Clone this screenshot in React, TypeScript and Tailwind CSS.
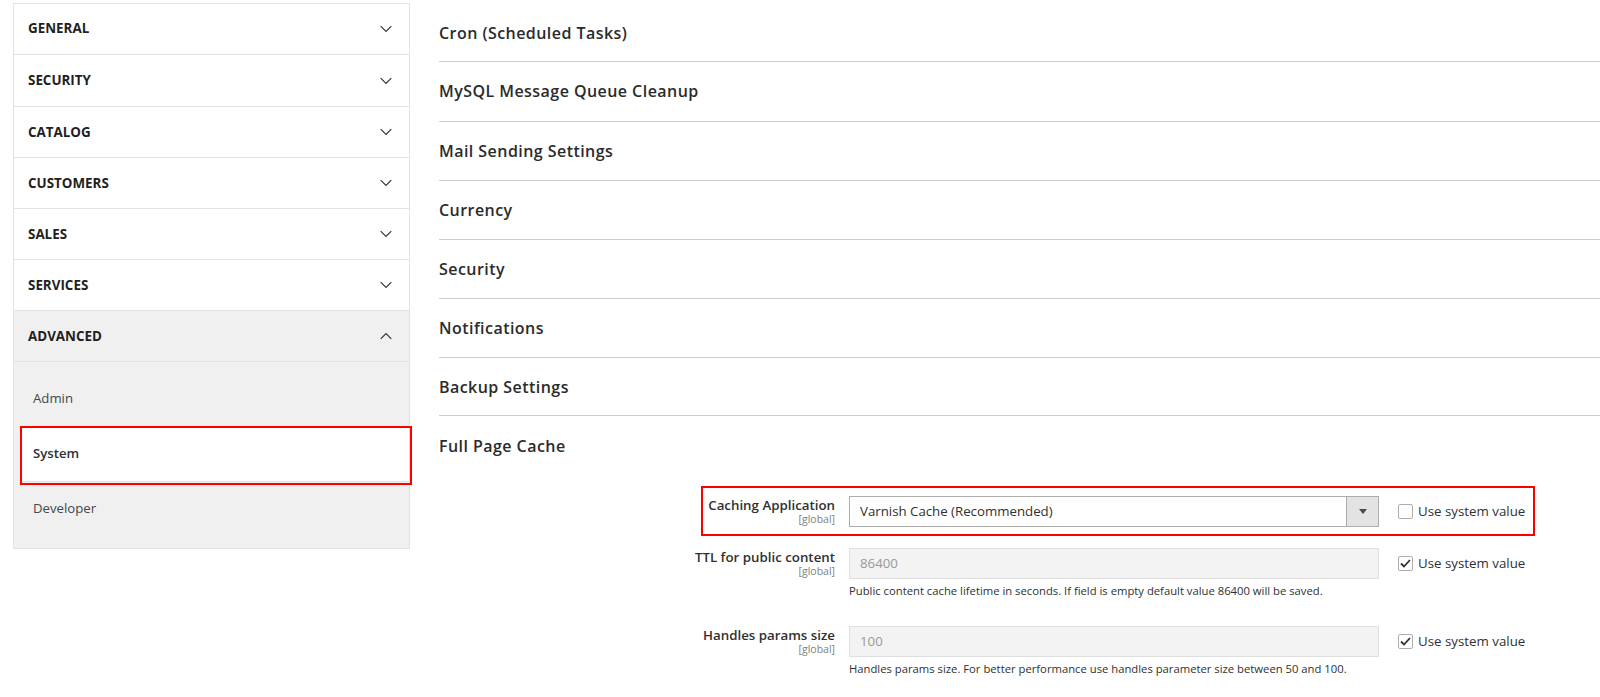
import React from "react";

const Chevron = ({ up }: { up?: boolean }) => (
  <svg width="12" height="8" viewBox="0 0 12 8" fill="none" stroke="#303030" strokeWidth="1.1" className="mr-[17px]">
    <path d={up ? "M0.7 6.8 L6 1.5 L11.3 6.8" : "M0.7 1.2 L6 6.5 L11.3 1.2"} />
  </svg>
);

const groups: [string, string][] = [
  ["GENERAL", "h-[51px] pb-[1px]"],
  ["SECURITY", "h-[52px]"],
  ["CATALOG", "h-[51px]"],
  ["CUSTOMERS", "h-[51px]"],
  ["SALES", "h-[51px]"],
  ["SERVICES", "h-[51px]"],
];
const sections: [string, string][] = [
  ["Cron (Scheduled Tasks)", "h-[62px] pt-[4px]"],
  ["MySQL Message Queue Cleanup", "h-[60px] pb-[2px]"],
  ["Mail Sending Settings", "h-[59px]"],
  ["Currency", "h-[59px] pb-[1px]"],
  ["Security", "h-[59px] pb-[1px]"],
  ["Notifications", "h-[59px]"],
  ["Backup Settings", "h-[58px] pt-[1px]"],
];

const Check = ({ checked }: { checked?: boolean }) => (
  <span className="flex h-[15px] w-[15px] items-center justify-center rounded-[2px] border border-[#adadad] bg-white">
    {checked && (
      <svg width="11" height="9" viewBox="0 0 11 9" fill="none" stroke="#303030" strokeWidth="1.8">
        <path d="M1 4.5 L4 7.5 L10 1" />
      </svg>
    )}
  </span>
);

const Field = ({ label, value, help, checked, select }: { label: string; value: string; help?: string; checked?: boolean; select?: boolean }) => (
  <div className="flex">
    <div className="w-[396px] text-right">
      <div className="text-[13.3px] leading-[18px] font-semibold text-[#303030]">{label}</div>
      <div className="text-[10.5px] leading-[11px] text-[#808080]">[global]</div>
    </div>
    <div className="ml-[14px] w-[530px]">
      {select ? (
        <div className="flex h-[31px] items-center border border-[#adadad] bg-white text-[13.25px] text-[#303030]">
          <span className="flex-1 pl-[10px]">{value}</span>
          <span className="flex h-full w-[32px] items-center justify-center border-l border-[#adadad] bg-[#e3e3e3]">
            <span className="h-0 w-0 border-x-[4px] border-t-[5px] border-x-transparent border-t-[#514943]" />
          </span>
        </div>
      ) : (
        <div className="flex h-[31px] items-center border border-[#e0e0e0] bg-[#f3f3f3] pl-[10px] text-[13.25px] text-[#999999]">{value}</div>
      )}
      {help && <div className="mt-[4px] text-[11.27px] leading-[16px] whitespace-nowrap text-[#303030]">{help}</div>}
    </div>
    <div className="ml-[19px] flex h-[31px] items-center gap-[5px] text-[13.3px] whitespace-nowrap text-[#303030]">
      <Check checked={checked} />
      <span>Use system value</span>
    </div>
  </div>
);

export default function App() {
  return (
    <div className="relative flex h-[697px] w-[1600px] overflow-hidden bg-white font-['Open_Sans',sans-serif]">
      <aside className="ml-[13px] mt-[3px] h-[546px] w-[397px] shrink-0 border border-[#e3e3e3] text-[#303030]">
        {groups.map(([g, h]) => (
          <div key={g} className={`flex ${h} items-center justify-between border-b border-[#e3e3e3] pl-[14px]`}>
            <span className="text-[13.4px] font-bold text-[#1f1f1f]">{g}</span>
            <Chevron />
          </div>
        ))}
        <div className="flex h-[51px] items-center justify-between border-b border-[#e3e3e3] bg-[#f0f0f0] pl-[14px]">
          <span className="text-[13.4px] font-bold text-[#1f1f1f]">ADVANCED</span>
          <Chevron up />
        </div>
        <div className="h-[186px] bg-[#f0f0f0] pt-[9px]">
          <div className="flex h-[55px] items-center pl-[19px] text-[13.2px] text-[#41474d]">Admin</div>
          <div className="ml-[8px] flex h-[56px] items-center border-b border-[#e3e3e3] bg-white pt-[1px] pl-[11px] text-[13.2px] font-semibold text-[#303030]">System</div>
          <div className="flex h-[55px] items-center pb-[2px] pl-[19px] text-[13.2px] text-[#41474d]">Developer</div>
        </div>
      </aside>
      <main className="ml-[29px] flex-1">
        {sections.map(([s, h]) => (
          <div key={s} className={`flex ${h} items-center border-b border-[#cccccc] text-[16px] font-semibold tracking-[0.45px] text-[#2b2b2b]`}>{s}</div>
        ))}
        <div className="flex h-[61px] items-center pb-[2px] text-[16px] font-semibold tracking-[0.45px] text-[#2b2b2b]">Full Page Cache</div>
        <div className="mt-[19px] flex flex-col">
          <div className="h-[52px]"><Field label="Caching Application" value="Varnish Cache (Recommended)" select /></div>
          <div className="h-[78px]"><Field label="TTL for public content" value="86400" checked help="Public content cache lifetime in seconds. If field is empty default value 86400 will be saved." /></div>
          <Field label="Handles params size" value="100" checked help="Handles params size. For better performance use handles parameter size between 50 and 100." />
        </div>
      </main>
      <div className="absolute left-[20px] top-[426px] h-[59px] w-[392px] border-2 border-[#ff0000]" />
      <div className="absolute left-[701px] top-[486px] h-[50px] w-[834px] border-2 border-[#ff0000]" />
    </div>
  );
}
